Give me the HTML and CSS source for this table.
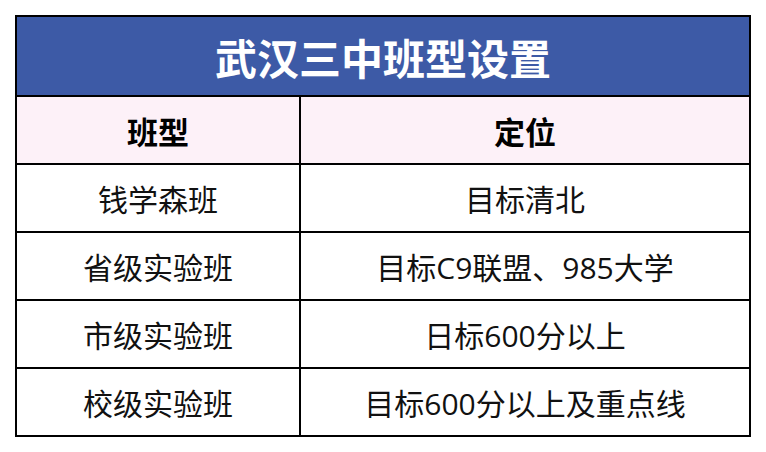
FILE: index.html
```html
<!DOCTYPE html>
<html lang="zh">
<head>
<meta charset="utf-8">
<link rel="stylesheet" href="styles.css">
</head>
<body>
<div class="page">
  <div class="sheet">
    <div class="title">武汉三中班型设置</div>
    <div class="row head">
      <div class="cell">班型</div>
      <div class="cell right">定位</div>
    </div>
    <div class="row">
      <div class="cell">钱学森班</div>
      <div class="cell right">目标清北</div>
    </div>
    <div class="row">
      <div class="cell">省级实验班</div>
      <div class="cell right">目标C9联盟、985大学</div>
    </div>
    <div class="row">
      <div class="cell">市级实验班</div>
      <div class="cell right">日标600分以上</div>
    </div>
    <div class="row">
      <div class="cell">校级实验班</div>
      <div class="cell right">目标600分以上及重点线</div>
    </div>
  </div>
</div>
</body>
</html>
```

FILE: styles.css
```css
html, body {
  margin: 0;
  padding: 0;
  background: #ffffff;
}
.page {
  padding: 15px 0 0 15px;
  font-family: "Noto Sans CJK SC", "Noto Sans", sans-serif;
}
.sheet {
  width: 736px;
  box-sizing: border-box;
  border: 2px solid #000;
}
.title {
  height: 78px;
  background: #3d5aa6;
  color: #ffffff;
  font-size: 42px;
  font-weight: 700;
  display: flex;
  align-items: center;
  justify-content: center;
}
.row {
  display: grid;
  grid-template-columns: 282px 1fr;
  height: 66px;
  border-top: 2px solid #000;
}
.cell {
  display: flex;
  align-items: center;
  justify-content: center;
  font-family: "Open Sans", "Noto Sans CJK SC", sans-serif;
  font-size: 30px;
  color: #111;
}
.right {
  border-left: 2px solid #000;
}
.head {
  background: #fdf1f8;
}
.head .cell {
  font-family: "Noto Sans CJK SC", sans-serif;
  font-size: 31px;
  font-weight: 700;
  color: #000;
}
```
